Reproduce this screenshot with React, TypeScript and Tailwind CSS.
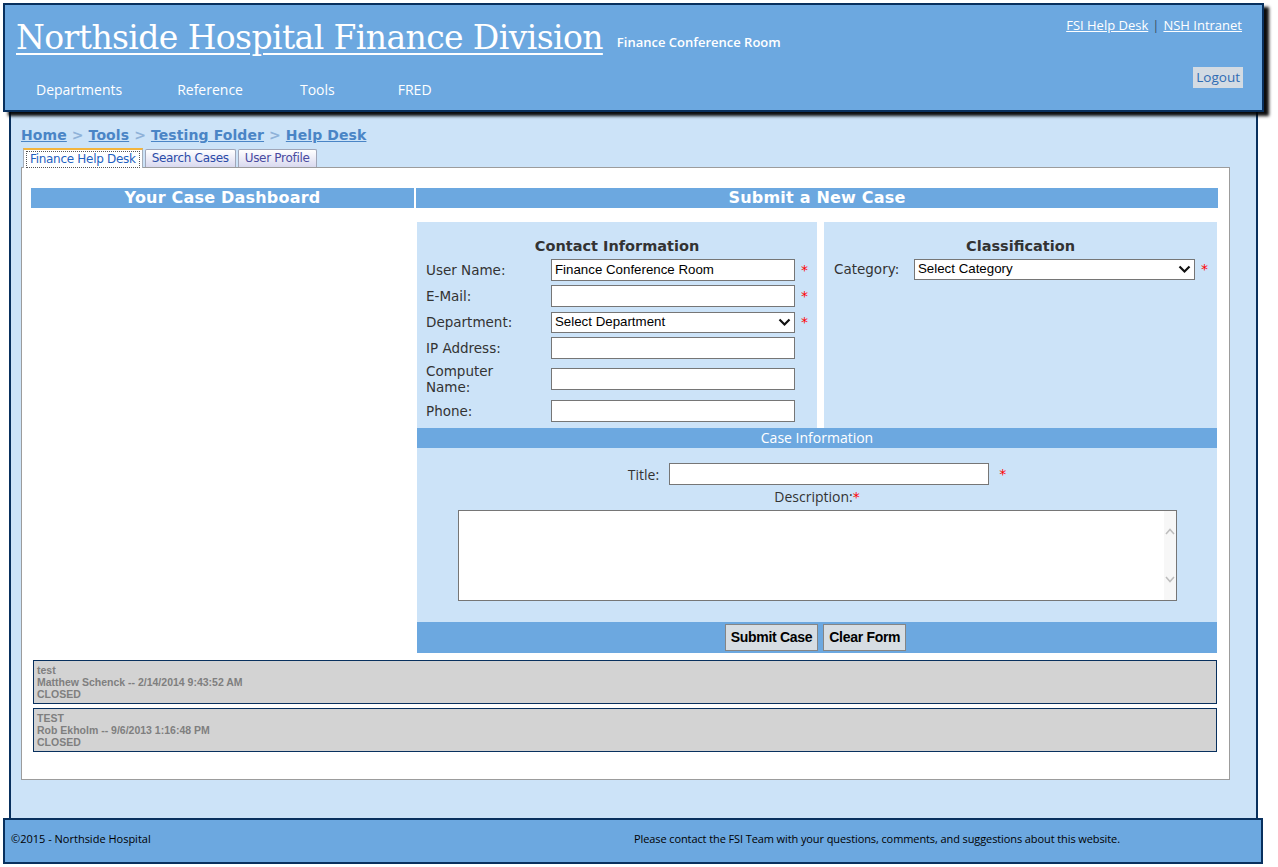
import React from "react";

const NAVY = "border-[#08305e]";

function Req() {
  return <span className="text-[#ff0000] text-[14px] ml-[6px] leading-none" style={{ fontFamily: "'DejaVu Sans', sans-serif" }}>*</span>;
}

function Row({ label, children, req = false, tall = false }: { label: React.ReactNode; children: React.ReactNode; req?: boolean; tall?: boolean }) {
  return (
    <div className={`flex items-center ${tall ? "h-[36px] mb-[1px]" : "h-[26px]"}`}>
      <div className="w-[134px] text-[13.5px] leading-[16px] text-[#333] pl-[9px]">{label}</div>
      {children}
      {req && <Req />}
    </div>
  );
}

function Input({ value = "" }: { value?: string }) {
  return (
    <div className="w-[244px] h-[22px] bg-white border border-[#767676] flex items-center px-[3px] text-[13.3px] text-black" style={{ fontFamily: "'Liberation Sans', Arial, sans-serif" }}>
      {value}
    </div>
  );
}

function Select({ value, w }: { value: string; w: string }) {
  return (
    <div className={`${w} h-[21px] bg-white border border-[#767676] flex items-center justify-between pl-[3px] pr-[3px] text-[13.3px] text-black`} style={{ fontFamily: "'Liberation Sans', Arial, sans-serif" }}>
      <span>{value}</span>
      <svg width="13" height="9" viewBox="0 0 13 9"><path d="M1.5 1.5 L6.5 6.5 L11.5 1.5" fill="none" stroke="#111" strokeWidth="2.2" /></svg>
    </div>
  );
}

export default function App() {
  const segoe = { fontFamily: "'Open Sans', 'Noto Sans', sans-serif" };
  const verdana = { fontFamily: "'DejaVu Sans', Verdana, sans-serif" };
  return (
    <div className="w-[1278px] h-[867px] bg-white overflow-hidden relative" style={segoe}>
      {/* Header */}
      <div className={`relative z-10 ml-[3px] mt-[3px] w-[1261px] h-[109px] border-2 ${NAVY} bg-[#6ca8e0] shadow-[5px_4px_3px_rgba(0,0,0,0.95)] flex flex-col`}>
        <div className="flex justify-between items-start h-[74px]">
          <div className="flex items-end pl-[11px] pt-[13px]">
            <span className="text-white text-[33px] leading-[40px] underline decoration-[2px] underline-offset-[4px] whitespace-nowrap tracking-[-0.6px]" style={{ fontFamily: "'DejaVu Serif', serif" }}>
              Northside Hospital Finance Division
            </span>
            <span className="text-white text-[13px] ml-[14px] mb-[6px] font-semibold whitespace-nowrap">Finance Conference Room</span>
          </div>
          <div className="flex flex-col items-end pr-[20px] pt-[11px]">
            <div className="text-[13px] text-white">
              <span className="underline">FSI Help Desk</span>
              <span className="text-[#3b4f66] mx-[4px]">|</span>
              <span className="underline">NSH Intranet</span>
            </div>
            <div className="mt-[31px] mr-[-1px] bg-[#d3dbe3] text-[#2f6cb3] text-[13.5px] leading-[21px] px-[3px] h-[21px]">Logout</div>
          </div>
        </div>
        <div className="flex items-center text-white text-[14px] pl-[31px] h-[20px]">
          <span>Departments</span>
          <span className="ml-[55px]">Reference</span>
          <span className="ml-[57px]">Tools</span>
          <span className="ml-[63px]">FRED</span>
        </div>
      </div>

      {/* Main */}
      <div className={`ml-[9px] w-[1249px] h-[706px] border-x-2 ${NAVY} bg-[#cce3f8] pl-[10px] pt-[14px]`}>
        <div className="text-[14px] font-bold text-[#4a85c6] leading-[18px] tracking-[0.1px]" style={verdana}>
          <span className="underline">Home</span>
          <span className="text-[#8fb2d8]"> &gt; </span>
          <span className="underline">Tools</span>
          <span className="text-[#8fb2d8]"> &gt; </span>
          <span className="underline">Testing Folder</span>
          <span className="text-[#8fb2d8]"> &gt; </span>
          <span className="underline">Help Desk</span>
        </div>
        {/* Tabs */}
        <div className="flex items-end h-[20px] mt-[3px] pl-[2px] text-[12px]" style={verdana}>
          <div className="h-[20px] bg-white border border-[#a6adb8] border-b-0 border-t-[2px] border-t-[#f3b43c] px-[2px] pt-[1px] relative z-10 mb-[-1px]">
            <div className="border border-dotted border-[#555] px-[3px] leading-[14px] text-[#1f5fbf] h-[17px] tracking-[-0.3px]">Finance Help Desk</div>
          </div>
          <div className="h-[18px] ml-[2px] bg-gradient-to-b from-[#ffffff] to-[#d9d9ef] border border-[#a0a6b8] border-b-0 rounded-t-[2px] px-[6px] leading-[16px] text-[#2b4ba8] tracking-[-0.3px]">Search Cases</div>
          <div className="h-[18px] ml-[2px] bg-gradient-to-b from-[#ffffff] to-[#d9d9ef] border border-[#a0a6b8] border-b-0 rounded-t-[2px] px-[6px] leading-[16px] text-[#4a4aa0] tracking-[-0.3px]">User Profile</div>
        </div>
        {/* White panel */}
        <div className="w-[1209px] h-[613px] bg-white border border-[#9c9c9c] pt-[20px] pl-[9px]">
          <div className="flex">
            <div className="w-[383px]">
              <div className="h-[20px] bg-[#6ca8e0] text-white font-bold text-[16px] leading-[20px] text-center tracking-[0.2px]" style={verdana}>Your Case Dashboard</div>
            </div>
            <div className="w-[802px] ml-[2px]">
              <div className="h-[20px] bg-[#6ca8e0] text-white font-bold text-[16px] leading-[20px] text-center tracking-[0.2px]" style={verdana}>Submit a New Case</div>
              <div className="mt-[14px] ml-[1px] w-[800px]">
                <div className="flex">
                  <div className="w-[400px] h-[206px] bg-[#cce3f8] pt-[15px]" style={verdana}>
                    <div className="text-center font-bold text-[14.5px] text-[#333] leading-[18px] mb-[2px]">Contact Information</div>
                    <Row label="User Name:" req><Input value="Finance Conference Room" /></Row>
                    <Row label="E-Mail:" req><Input /></Row>
                    <Row label="Department:" req><Select value="Select Department" w="w-[244px]" /></Row>
                    <Row label="IP Address:"><Input /></Row>
                    <Row label={<>Computer<br />Name:</>} tall><Input /></Row>
                    <Row label="Phone:"><Input /></Row>
                  </div>
                  <div className="w-[7px] bg-white" />
                  <div className="w-[393px] h-[206px] bg-[#cce3f8] pt-[15px]" style={verdana}>
                    <div className="text-center font-bold text-[14.5px] text-[#333] leading-[18px] mb-[2px]">Classification</div>
                    <div className="flex items-center h-[24px]">
                      <div className="w-[90px] pl-[10px] text-[13.5px] text-[#333]">Category:</div>
                      <Select value="Select Category" w="w-[281px]" />
                      <Req />
                    </div>
                  </div>
                </div>
                <div className="h-[20px] bg-[#6ca8e0] text-white text-[14px] leading-[20px] text-center">Case Information</div>
                <div className="h-[174px] bg-[#cce3f8] pt-[15px]">
                  <div className="flex items-center justify-center h-[22px] text-[14px] text-[#333] pr-[6px]">
                    <span className="mr-[10px] ml-[6px]">Title:</span>
                    <div className="w-[320px] h-[22px] bg-white border border-[#767676]" />
                    <span className="text-[#ff0000] ml-[10px]" style={verdana}>*</span>
                  </div>
                  <div className="text-center text-[14px] text-[#333] mt-[2px] leading-[20px]">
                    Description:<span className="text-[#ff0000]" style={verdana}>*</span>
                  </div>
                  <div className="ml-[41px] mt-[3px] w-[719px] h-[91px] bg-white border border-[#767676] flex justify-end">
                    <div className="w-[12px] h-full bg-[#f7f7f7] flex flex-col items-center justify-between py-[17px]">
                      <svg width="10" height="8" viewBox="0 0 10 8"><path d="M1 6 L5 1.5 L9 6" fill="none" stroke="#bdbdbd" strokeWidth="1.5" /></svg>
                      <svg width="10" height="8" viewBox="0 0 10 8"><path d="M1 2 L5 6.5 L9 2" fill="none" stroke="#bdbdbd" strokeWidth="1.5" /></svg>
                    </div>
                  </div>
                </div>
                <div className="h-[31px] bg-[#6ca8e0] flex items-center justify-center gap-[5px] pr-[3px]" style={{ fontFamily: "'Liberation Sans', Arial, sans-serif" }}>
                  <div className="h-[27px] px-[5px] bg-[#d6dde3] border border-[#858585] text-[14px] font-bold text-black leading-[25px] tracking-[-0.3px]">Submit Case</div>
                  <div className="h-[27px] px-[5px] bg-[#d6dde3] border border-[#858585] text-[14px] font-bold text-black leading-[25px] tracking-[-0.3px]">Clear Form</div>
                </div>
              </div>
            </div>
          </div>
          {/* Cases */}
          <div className="mt-[7px] ml-[2px] w-[1184px] flex flex-col gap-[4px] text-[10.5px] font-bold text-[#7f7f7f] leading-[12px]" style={{ fontFamily: "'Liberation Sans', Arial, sans-serif" }}>
            <div className="h-[44px] bg-[#d3d3d3] border border-[#08305e] pl-[3px] pt-[3px]">
              <div>test</div>
              <div>Matthew Schenck -- 2/14/2014 9:43:52 AM</div>
              <div>CLOSED</div>
            </div>
            <div className="h-[44px] bg-[#d3d3d3] border border-[#08305e] pl-[3px] pt-[3px]">
              <div>TEST</div>
              <div>Rob Ekholm -- 9/6/2013 1:16:48 PM</div>
              <div>CLOSED</div>
            </div>
          </div>
        </div>
      </div>

      {/* Footer */}
      <div className={`ml-[3px] w-[1260px] h-[46px] border-2 ${NAVY} bg-[#6ca8e0] flex items-center pb-[3px] text-[11px] text-black`}>
        <div className="w-[621px] pl-[6px]">©2015 - Northside Hospital</div>
        <div className="pl-[8px] tracking-[-0.1px]">Please contact the FSI Team with your questions, comments, and suggestions about this website.</div>
      </div>
    </div>
  );
}
